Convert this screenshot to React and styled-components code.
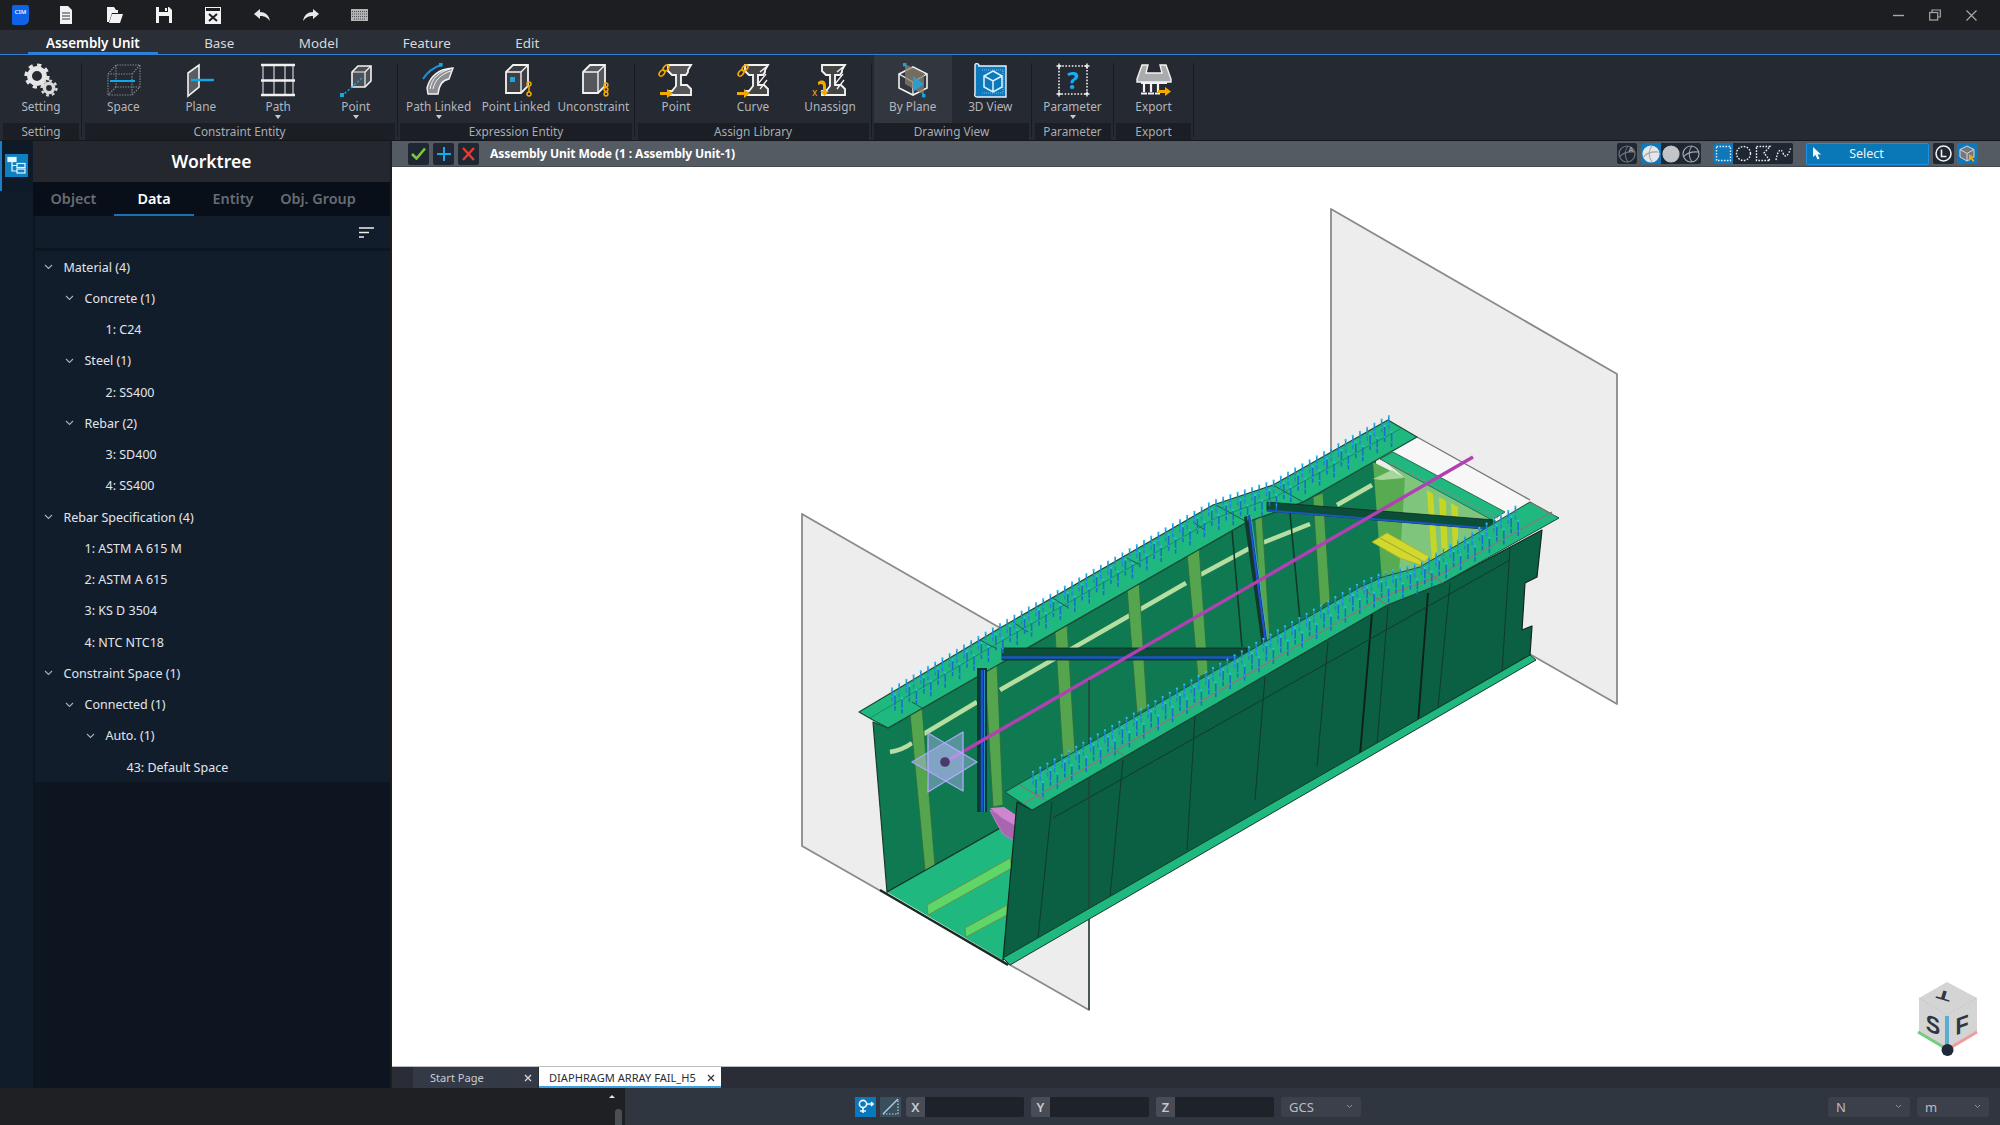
import React from "react";
import styled, { createGlobalStyle } from "styled-components";

const GlobalStyle = createGlobalStyle`
  html, body { margin: 0; padding: 0; background: #1c1e22; }
  body { font-family: "Noto Sans", "Open Sans", sans-serif; }
  * { box-sizing: border-box; }
`;

const Shell = styled.div`
  width: 2000px;
  height: 1125px;
  overflow: hidden;
  display: flex;
  flex-direction: column;
  background: #1c1e22;
`;

/* title bar */
const TitleBar = styled.div`
  height: 30px;
  display: flex;
  align-items: center;
  background: #1c1e22;
  padding-left: 12px;
`;
const QuickIcon = styled.div`
  width: 49px;
  display: flex;
  justify-content: center;
`;
const Logo = styled.div`
  width: 17px;
  height: 20px;
  margin-right: 12px;
  background: #0f62e6;
  border-radius: 2px 2px 5px 2px;
  color: #cfe2ff;
  font-size: 6px;
  font-weight: 700;
  text-align: center;
  line-height: 15px;
`;
const WindowButtons = styled.div`
  margin-left: auto;
  display: flex;
  align-items: center;
  gap: 25px;
  padding-right: 23px;
`;

/* menu tabs */
const MenuBar = styled.div`
  height: 25px;
  display: flex;
  align-items: stretch;
  gap: 28.5px;
  padding-left: 28px;
  background: #2a2e37;
  border-bottom: 1px solid #2f80d8;
`;
const MenuTab = styled.div`
  padding: 1px 18px 0;
  font-size: 13.4px;
  line-height: 24px;
  color: ${(p) => (p.$active ? "#ffffff" : "#d6d9de")};
  font-weight: ${(p) => (p.$active ? 600 : 400)};
  box-shadow: ${(p) => (p.$active ? "inset 0 -2px 0 #2f80d8" : "none")};
`;

/* ribbon */
const Ribbon = styled.div`
  height: 86px;
  display: flex;
  padding-left: 3px;
  background: #252932;
  border-bottom: 1px solid #14171c;
`;
const Group = styled.div`
  width: ${(p) => p.$w}px;
  display: flex;
  flex-direction: column;
`;
const GroupItems = styled.div`
  display: flex;
  height: 68px;
`;
const GroupName = styled.div`
  height: 17px;
  background: #1b1e24;
  color: #a8acb3;
  font-size: 11.8px;
  line-height: 17px;
  text-align: center;
`;
const Separator = styled.div`
  width: 5.5px;
  &::after {
    content: "";
    display: block;
    width: 1px;
    height: 74px;
    margin: 8px 0 0 2px;
    background: #171a1f;
  }
`;
const Tool = styled.div`
  flex: 1;
  display: flex;
  flex-direction: column;
  align-items: center;
  padding-top: 7px;
  background: ${(p) => (p.$hover ? "#32363f" : "transparent")};
`;
const ToolIcon = styled.svg`
  width: 36px;
  height: 36px;
  display: block;
`;
const ToolLabel = styled.div`
  margin-top: 1px;
  height: 14px;
  font-size: 11.8px;
  line-height: 14px;
  color: #b2b6bd;
  white-space: nowrap;
`;
const DropMark = styled.div`
  width: 0;
  height: 0;
  margin-top: 2px;
  border-left: 3px solid transparent;
  border-right: 3px solid transparent;
  border-top: 4px solid #c8ccd2;
`;

/* main */
const Main = styled.div`
  height: 947px;
  display: flex;
`;
const Rail = styled.div`
  width: 33px;
  background: #101c2a;
`;
const RailItem = styled.div`
  height: 50px;
  padding: 13px 0 0 3px;
  border-left: 2px solid #1c7fc8;
  background: #0e1a28;
`;
const RailIcon = styled.div`
  width: 23px;
  height: 23px;
  background: #0f80bf;
  display: flex;
  align-items: center;
  justify-content: center;
`;
const SidePanel = styled.div`
  width: 357px;
  margin-right: 2px;
  display: flex;
  flex-direction: column;
  background: #0c1520;
  border-left: 2px solid #0c1520;
`;
const PanelTitle = styled.div`
  height: 41px;
  margin-left: -2px;
  background: #24272e;
  color: #ffffff;
  font-size: 17.5px;
  font-weight: 600;
  line-height: 41px;
  text-align: center;
`;
const PanelTabs = styled.div`
  height: 34px;
  margin-left: -2px;
  display: grid;
  grid-template-columns: 81px 80px 78px 92px;
  background: #080f18;
`;
const PanelTab = styled.div`
  font-size: 14.4px;
  font-weight: 600;
  line-height: 34px;
  text-align: center;
  color: ${(p) => (p.$active ? "#ffffff" : "#676c72")};
  box-shadow: ${(p) => (p.$active ? "inset 0 -2px 0 #1e6fb0" : "none")};
`;
const SortBar = styled.div`
  height: 32px;
  display: flex;
  align-items: center;
  justify-content: flex-end;
  padding-right: 16px;
  background: #121d2b;
`;
const Tree = styled.div`
  margin-top: 3px;
  background: #121d2b;
`;
const TreeRow = styled.div`
  height: 31.25px;
  display: flex;
  align-items: center;
  padding: 1px 0 0 ${(p) => 7.5 + p.$level * 21}px;
  color: #e1e6ec;
  font-size: 12.5px;
`;
const Caret = styled.div`
  width: 21px;
  flex: none;
  padding-left: 1px;
  display: flex;
  align-items: center;
`;

const WorkArea = styled.div`
  flex: 1;
  display: flex;
  flex-direction: column;
  min-width: 0;
`;
const ViewBar = styled.div`
  height: 26px;
  display: flex;
  align-items: center;
  padding-left: 16px;
  background: #555b63;
  border-bottom: 1px solid #44494f;
`;
const ModeButton = styled.div`
  width: 21px;
  height: 22px;
  margin-right: 4px;
  background: #1f2733;
  border-radius: 2px;
  display: flex;
  align-items: center;
  justify-content: center;
`;
const ModeTitle = styled.div`
  margin-left: 7px;
  color: #ffffff;
  font-size: 12.1px;
  font-weight: 700;
  letter-spacing: -0.1px;
`;
const ViewTools = styled.div`
  margin-left: auto;
  padding-right: 22px;
  display: flex;
  align-items: center;
`;
const IconGroup = styled.div`
  display: flex;
  height: 21px;
  margin-left: ${(p) => p.$gap || 0}px;
  background: #1f2733;
  border-radius: 2px;
  overflow: hidden;
`;
const IconCell = styled.div`
  width: ${(p) => p.$w || 20}px;
  height: 21px;
  display: flex;
  align-items: center;
  justify-content: center;
  background: ${(p) => (p.$on ? "#0f78bb" : "transparent")};
`;
const SelectButton = styled.div`
  width: 123px;
  height: 22px;
  margin-left: 13px;
  display: flex;
  align-items: center;
  padding-left: 5px;
  background: #0a78b6;
  border: 1px solid #1a90e6;
  border-radius: 2px;
  color: #e8f4fb;
  font-size: 12.5px;
`;
const SelectText = styled.span`
  flex: 1;
  text-align: center;
  padding-right: 18px;
`;
const Canvas = styled.div`
  height: 900px;
  background: #ffffff;
  border-bottom: 1px solid #b9bcc0;
`;
const ModelSvg = styled.svg`
  display: block;
  width: 1608px;
  height: 900px;
`;
const DocTabs = styled.div`
  height: 21px;
  display: flex;
  padding-left: 21px;
  background: #2a2d35;
`;
const DocTab = styled.div`
  width: ${(p) => p.$w}px;
  margin-right: 1px;
  display: flex;
  align-items: center;
  justify-content: space-between;
  padding: 0 6px 0 ${(p) => (p.$active ? 10 : 17)}px;
  font-size: 11.1px;
  color: ${(p) => (p.$active ? "#2a2d35" : "#c8ccd2")};
  background: ${(p) => (p.$active ? "#ffffff" : "#333945")};
  box-shadow: ${(p) => (p.$active ? "inset 0 -2px 0 #3aa0e0" : "none")};
`;

/* status bar */
const StatusBar = styled.div`
  height: 37px;
  display: flex;
`;
const StatusLeft = styled.div`
  width: 625px;
  background: #1e2024;
  display: flex;
  flex-direction: column;
  align-items: flex-end;
  padding: 7px 3px 0 0;
`;
const UpMark = styled.div`
  width: 0;
  height: 0;
  margin-right: 7px;
  border-left: 3px solid transparent;
  border-right: 3px solid transparent;
  border-bottom: 3px solid #e6e6e6;
`;
const ScrollThumb = styled.div`
  width: 7px;
  height: 16px;
  margin-top: 11px;
  border-radius: 3px 3px 0 0;
  background: #4a4e55;
`;
const StatusRight = styled.div`
  flex: 1;
  display: flex;
  align-items: center;
  padding: 0 11px 0 230px;
  background: #303640;
`;
const SnapButton = styled.div`
  width: 21px;
  height: 20px;
  margin-right: ${(p) => (p.$on ? 4 : 5)}px;
  display: flex;
  align-items: center;
  justify-content: center;
  background: ${(p) => (p.$on ? "#0a78bc" : "#3c4e5a")};
`;
const Coord = styled.div`
  width: 118px;
  height: 20px;
  margin-right: 7px;
  display: flex;
  border-radius: 2px;
  overflow: hidden;
  background: #1e2229;
`;
const CoordName = styled.div`
  width: 19px;
  background: #474c56;
  color: #c6cad0;
  font-size: 13px;
  font-weight: 600;
  line-height: 20px;
  text-align: center;
`;
const Combo = styled.div`
  width: ${(p) => p.$w}px;
  height: 20px;
  margin-left: ${(p) => p.$gap || 0}px;
  display: flex;
  align-items: center;
  justify-content: space-between;
  padding: 0 8px;
  background: #3c404a;
  border-radius: 3px;
  color: #b8bcc4;
  font-size: 13px;
`;

const w = "#f2f2f2";
const cy = "#12a8e8";
const or = "#f5a800";

const IBeam = ({ hatch }) => (
  <g>
    <path d="M10 3 H33 L30 8 V10 L28 13 H23 V23 H29 L33 27 V33 H10 V29 H14 L18 24 V13 H14 L10 9 Z" fill={hatch ? "#444" : "#565656"} stroke={w} strokeWidth="1.9" />
    {hatch && <path d="M23 22 L31 12 M25 27 L32 18 M25 10 L31 5" stroke={w} strokeWidth="1.3" />}
  </g>
);
const Chain = ({ x, y }) => (
  <g fill="none" stroke={or} strokeWidth="1.6">
    <ellipse cx={x + 5} cy={y + 3} rx="2.2" ry="3.6" transform={`rotate(40 ${x + 5} ${y + 3})`} />
    <ellipse cx={x + 1} cy={y + 8} rx="2.2" ry="3.6" transform={`rotate(40 ${x + 1} ${y + 8})`} />
  </g>
);
const ArrowRight = ({ x, y }) => <path d={`M${x} ${y} h7 v-3 l6 4.5 l-6 4.5 v-3 h-7 Z`} fill={or} />;
const Box3d = ({ fill }) => (
  <g>
    <path d="M8 10 L15 3 H30 V24 L23 31 H8 Z" fill={fill} stroke={w} strokeWidth="1.8" />
    <path d="M8 10 H23 V31 M23 10 L30 3" fill="none" stroke={w} strokeWidth="1.4" />
  </g>
);

const toolIcons = {
  setting: (
    <g>
      <circle cx="14" cy="14" r="7.5" fill="none" stroke="#e6e6e6" strokeWidth="5" />
      <circle cx="14" cy="14" r="11" fill="none" stroke="#e6e6e6" strokeWidth="3.2" strokeDasharray="4.2 4.4" />
      <circle cx="26" cy="26" r="4.6" fill="none" stroke="#d8d8d8" strokeWidth="3.4" />
      <circle cx="26" cy="26" r="7.4" fill="none" stroke="#d8d8d8" strokeWidth="2.4" strokeDasharray="2.8 3" />
    </g>
  ),
  space: (
    <g fill="none" stroke="#8a8d93" strokeWidth="1.1" strokeDasharray="1.4 1.2">
      <path d="M3 12 L11 3 H35 V25 L27 33 H3 Z M3 12 H27 V33 M27 12 L35 3 M11 3 V25 H35 M11 25 L3 33" />
      <path d="M5 19 H30" stroke={cy} strokeWidth="2" strokeDasharray="none" />
    </g>
  ),
  plane: (
    <g>
      <path d="M5 11 L16 3 V25 L5 34 Z" fill="#5a5d62" stroke={w} strokeWidth="1.6" />
      <path d="M8 18 H31" stroke={cy} strokeWidth="2.4" />
    </g>
  ),
  path: (
    <g stroke={w} fill="none">
      <path d="M1 3 H35 M1 18.5 H35 M1 33 H35" strokeWidth="2.6" />
      <path d="M3 3 V33 M14 3 V33 M25 3 V33 M33 3 V33" strokeWidth="1" />
    </g>
  ),
  point: (
    <g>
      <path d="M14 10 L20 4 H33 V19 L27 25 H14 Z" fill="#4c4f55" stroke={w} strokeWidth="1.6" />
      <path d="M14 10 H27 V25 M27 10 L33 4" fill="none" stroke={w} strokeWidth="1.2" />
      <path d="M24 16 L5 33" stroke={cy} strokeWidth="1.4" strokeDasharray="2.4 1.8" />
      <rect x="2" y="31" width="4" height="4" fill={cy} />
    </g>
  ),
  pathLinked: (
    <g>
      <path d="M6 26 C9 14 18 7 32 6 L28 17 C21 18 18 23 17 32 H7 Z" fill="#8d8f93" stroke={w} strokeWidth="1.4" />
      <path d="M12 27 C14 18 20 12 30 9 M9 27 C11 16 18 10 29 7" fill="none" stroke={w} strokeWidth="1" />
      <path d="M2 17 C7 9 14 5 20 3" fill="none" stroke="#1a8fe0" strokeWidth="2" />
      <rect x="18" y="1" width="3.6" height="3.6" fill={cy} />
    </g>
  ),
  pointLinked: (
    <g>
      <Box3d fill="#3d3f44" />
      <rect x="12" y="15" width="5" height="5" fill={cy} />
      <g fill="none" stroke={or} strokeWidth="1.5">
        <circle cx="31" cy="22" r="2" />
        <path d="M31 24 V30" />
        <circle cx="31" cy="32" r="2" />
      </g>
    </g>
  ),
  unconstraint: (
    <g>
      <Box3d fill="#55575c" />
      <g fill="none" stroke={or} strokeWidth="1.5">
        <circle cx="31" cy="23" r="1.9" />
        <circle cx="31" cy="27.5" r="1.9" />
        <circle cx="31" cy="32" r="1.9" />
      </g>
    </g>
  ),
  assignPoint: (
    <g>
      <IBeam />
      <Chain x={3} y={3} />
      <ArrowRight x={2} y={30} />
    </g>
  ),
  assignCurve: (
    <g>
      <IBeam hatch />
      <Chain x={5} y={3} />
      <ArrowRight x={2} y={30} />
    </g>
  ),
  unassign: (
    <g>
      <IBeam hatch />
      <path d="M6 20 C11 17 14 19 14 24 V29 h3 l-4.5 5 l-4.5 -5 h3 V24 C11 22 9 21 6 23 Z" fill={or} />
      <text x="0" y="34" fill={or} fontSize="10" fontFamily="Noto Sans, sans-serif">x</text>
    </g>
  ),
  byPlane: (
    <g>
      <path d="M18 5 L32 12 V26 L18 33 L4 26 V12 Z" fill="none" stroke={w} strokeWidth="1.6" />
      <path d="M4 12 L18 20 L32 12 M18 20 V33" fill="none" stroke={w} strokeWidth="1.4" />
      <path d="M10 2 L29 11 V33 L10 22 Z" fill="#8a7f6e" opacity="0.75" />
      <path d="M18 14 L29 22 L18 30 Z" fill="#2f9bd0" />
      <rect x="8" y="1" width="3.4" height="3.4" fill={cy} />
      <rect x="27" y="32" width="3.4" height="3.4" fill={cy} />
    </g>
  ),
  view3d: (
    <g>
      <path d="M3 3 C3 1 7 1 7 4 H34 V35 H5 C3 35 2 33 3 31 Z" fill="#0d79bd" stroke="#e8f4fb" strokeWidth="1.4" />
      <path d="M10 8 H31 V31 H10" fill="none" stroke="#6dc0ee" strokeDasharray="1 1" />
      <path d="M21 9 L30 14 V25 L21 30 L12 25 V14 Z M12 14 L21 19 L30 14 M21 19 V30" fill="none" stroke="#e2f2fc" strokeWidth="1.5" />
    </g>
  ),
  parameter: (
    <g>
      <rect x="4" y="4" width="28" height="28" fill="none" stroke={w} strokeWidth="1.6" strokeDasharray="1.6 1.6" />
      <path d="M1.5 4 H6.5 M4 1.5 V6.5 M29.5 4 H34.5 M32 1.5 V6.5 M1.5 32 H6.5 M4 29.5 V34.5 M29.5 32 H34.5 M32 29.5 V34.5" stroke={w} strokeWidth="1.4" />
      <text x="18" y="27" textAnchor="middle" fill="#12b0f2" fontSize="24" fontWeight="700" fontFamily="Noto Sans, sans-serif">?</text>
    </g>
  ),
  exportIcon: (
    <g>
      <path d="M1 17 L6 3 H12 L10 11 H26 L24 3 H30 L35 17 V20 H1 Z" fill="#a9abae" stroke={w} strokeWidth="1.4" />
      <path d="M5 21 H31 M8 21 V30 M15 21 V30 M22 21 V30" stroke={w} strokeWidth="2.2" />
      <path d="M5 31.5 H11 M12 31.5 H18 M19 31.5 H24" stroke={w} strokeWidth="1.8" />
      <ArrowRight x={22} y={28} />
    </g>
  ),
};

const groups = [
  { name: "Setting", w: 76, tools: [["Setting", "setting"]] },
  {
    name: "Constraint Entity",
    w: 310,
    tools: [["Space", "space"], ["Plane", "plane"], ["Path", "path", true], ["Point", "point", true]],
  },
  {
    name: "Expression Entity",
    w: 232,
    tools: [["Path Linked", "pathLinked", true], ["Point Linked", "pointLinked"], ["Unconstraint", "unconstraint"]],
  },
  {
    name: "Assign Library",
    w: 231,
    tools: [["Point", "assignPoint"], ["Curve", "assignCurve"], ["Unassign", "unassign"]],
  },
  { name: "Drawing View", w: 155, tools: [["By Plane", "byPlane", false, true], ["3D View", "view3d"]] },
  { name: "Parameter", w: 76, tools: [["Parameter", "parameter", true]] },
  { name: "Export", w: 75, tools: [["Export", "exportIcon"]] },
];

const treeRows = [
  [0, "Material (4)", true],
  [1, "Concrete (1)", true],
  [2, "1: C24"],
  [1, "Steel (1)", true],
  [2, "2: SS400"],
  [1, "Rebar (2)", true],
  [2, "3: SD400"],
  [2, "4: SS400"],
  [0, "Rebar Specification (4)", true],
  [1, "1: ASTM A 615 M"],
  [1, "2: ASTM A 615"],
  [1, "3: KS D 3504"],
  [1, "4: NTC NTC18"],
  [0, "Constraint Space (1)", true],
  [1, "Connected (1)", true],
  [2, "Auto. (1)", true],
  [3, "43: Default Space"],
];

const farEdge = [[859, 712], [1000, 628], [1213, 505], [1273, 485], [1388, 420]];
const nearEdge = [[1005, 792], [1360, 587], [1383, 577], [1420, 567], [1530, 502]];

const edgeY = (pts, x) => {
  for (let i = 0; i < pts.length - 1; i++) {
    const [x0, y0] = pts[i];
    const [x1, y1] = pts[i + 1];
    if (x >= x0 && x <= x1) return y0 + ((x - x0) / (x1 - x0)) * (y1 - y0);
  }
  return pts[pts.length - 1][1];
};

// rebars: a dense row on the flange edge, two longer rows behind it
const pinRows = [
  { dy: -4, step: 7.2, shift: 0, len: 13, color: "#2386d4" },
  { dy: 4, step: 14.4, shift: 3, len: 16, color: "#1a6cc4" },
  { dy: 12, step: 14.4, shift: 10, len: 15, color: "#1a6cc4" },
];

const Pins = ({ edge, from, to }) => {
  const pins = [];
  pinRows.forEach((row) => {
    for (let x = from + row.shift; x < to; x += row.step) {
      pins.push({ x, y: edgeY(edge, x) + row.dy, len: row.len, color: row.color });
    }
  });
  return (
    <g>
      {pins.map((p, i) => (
        <g key={i}>
          <path d={`M${p.x} ${p.y} v${p.len}`} stroke={p.color} strokeWidth="1.5" />
          <circle cx={p.x} cy={p.y} r="1.1" fill="#26c6f2" />
          <circle cx={p.x} cy={p.y + p.len - 5} r="0.8" fill="#26b4ea" />
        </g>
      ))}
    </g>
  );
};

const stiffeners = [
  [[910, 714], [922, 708], [936, 878], [930, 882], [925, 870]],
  [[985, 670], [997, 664], [1003, 805], [993, 807]],
  [[1055, 632], [1067, 625], [1075, 753], [1063, 757]],
  [[1127, 588], [1139, 582], [1147, 708], [1137, 713]],
  [[1187, 553], [1199, 547], [1208, 673], [1198, 677]],
  [[1255, 520], [1262, 516], [1270, 640], [1263, 640]],
  [[1313, 497], [1323, 493], [1330, 600], [1320, 607]],
];

const toPoints = (pts) => pts.map((p) => p.join(",")).join(" ");

const BridgeModel = () => (
  <g strokeLinejoin="round">
    {/* cutting planes */}
    <polygon points="802,514 1089,679 1089,1010 802,846" fill="#ededed" stroke="#8a8a8a" strokeWidth="1.8" />
    <polygon points="1331,209 1617,374 1617,704 1331,540" fill="#ededed" stroke="#8a8a8a" strokeWidth="1.8" />
    <polygon points="1417,437 1530,500 1505,514 1393,452" fill="#f7f7f7" />
    <path d="M1417 437 L1530 500" stroke="#777" strokeWidth="1.4" />

    {/* far web and end plate */}
    <polygon points="873,722 888,728 1247,522 1303,502 1375,460 1385,610 887,892" fill="#0f7a52" stroke="#1c3a2c" strokeWidth="1.2" />
    <polygon points="1385,462 1492,520 1450,572 1420,590 1385,595 1405,478" fill="#80c57c" />
    <polygon points="1373,462 1405,478 1398,590 1383,595" fill="#58ab50" />
    <path d="M1373 479 L1392 470 L1404 478 L1382 480 Z" fill="#a6d69a" />
    <g fill="#c5d626">
      <polygon points="1427,490 1433,494 1438,562 1432,562" />
      <polygon points="1439,497 1446,501 1448,558 1442,560" />
      <polygon points="1451,503 1458,507 1458,548 1453,552" />
    </g>
    <polygon points="1372,542 1387,533 1430,557 1420,565 1400,558" fill="#d2d830" stroke="#aeb41e" strokeWidth="0.8" />
    <path d="M1380 538 L1424 562" stroke="#a8b024" strokeWidth="1.4" />

    {/* pale longitudinal stiffener */}
    <path d="M890 752 C902 750 908 746 912 743 M917 738 L977 702 M1000 690 L1186 583 M1200 575 L1250 548 M1257 545 L1310 524 M1337 505 L1372 485" fill="none" stroke="#b6dea0" strokeWidth="4.5" />
    {stiffeners.map((pts, i) => (
      <polygon key={i} points={toPoints(pts)} fill="#55a54f" stroke="#2f6b3c" strokeWidth="0.8" />
    ))}
    <path d="M1232 530 L1242 647 M1290 513 L1300 620" stroke="#12382a" strokeWidth="1.6" />

    {/* floor */}
    <polygon points="887,892 1020,817 1020,850 1003,960" fill="#1fb87f" />
    <polygon points="927,905 1010,858 1012,868 928,915" fill="#5fd668" stroke="#6c8f50" strokeWidth="1" />
    <polygon points="965,928 1007,905 1007,915 966,937" fill="#5fd668" stroke="#6c8f50" strokeWidth="1" />
    <path d="M880 890 L1008 965" stroke="#182a22" strokeWidth="2.2" />
    <path d="M887 892 L1020 817" stroke="#14352a" strokeWidth="1.2" />

    {/* back flange */}
    <polygon points="1380,459 1393,452 1505,512 1492,520" fill="#1fb87f" stroke="#2e6a52" strokeWidth="1" />
    <path d="M1390 463 L1498 518" stroke="#7a8f85" strokeWidth="1" />

    {/* far flange */}
    <polygon points="859,712 1000,628 1213,505 1273,485 1388,420 1417,437 1303,502 1247,522 888,728 873,720" fill="#1fb87f" stroke="#1a4a38" strokeWidth="1.2" />
    <path d="M870 718 L1000 642 L1216 518 L1275 497 L1402 428" fill="none" stroke="#159064" strokeWidth="1" />
    <path d="M980 640 L997 649 M1013 622 L1028 632 M1053 598 L1067 607 M1127 558 L1140 565 M1193 522 L1205 530 M1216 505 L1247 522 M1273 485 L1303 502 M912 702 L922 708" stroke="#1d5a44" strokeWidth="1" />

    {/* cross beams */}
    <polygon points="1002,648 1247,648 1247,660 1002,660" fill="#0a4e38" stroke="#10281f" strokeWidth="0.8" />
    <path d="M1002 657.5 H1247" stroke="#1a56c4" strokeWidth="2.4" />
    <polygon points="1267,502 1495,520 1495,530 1267,511" fill="#0a4e38" stroke="#10281f" strokeWidth="0.8" />
    <path d="M1267 510.5 L1495 529" stroke="#1a56c4" strokeWidth="1.8" />
    <polygon points="1244,517 1250,515 1268,645 1262,647" fill="#12382a" />
    <path d="M1249 516 L1266 645" stroke="#1e50d8" strokeWidth="2" />
    <path d="M1251 516 L1268 644" stroke="#3db0e0" strokeWidth="0.8" />
    <rect x="977" y="668" width="10" height="144" fill="#0b3a34" />
    <path d="M982 670 V812" stroke="#1a50d8" strokeWidth="2.6" />
    <path d="M984.5 670 V812" stroke="#2fa0d8" strokeWidth="0.8" />

    {/* axis and gizmo */}
    <path d="M945 762 L1473 457" stroke="#b340b3" strokeWidth="3.4" />
    <polygon points="990,810 1016,820 1016,842 1003,834 996,822" fill="#a866b0" stroke="#c77cc7" strokeWidth="1" />
    <polygon points="990,808 1004,807 1016,815 1016,826 1002,818" fill="#cf86cf" />
    <g fill="#bcb8ff" fillOpacity="0.42" stroke="#a8a8f4" strokeWidth="1.4">
      <polygon points="928,733 928,792 977,762" />
      <polygon points="963,732 963,791 912,762" />
    </g>
    <circle cx="945" cy="762" r="4.8" fill="#4a3a6a" />

    {/* near web */}
    <polygon points="1017,802 1032,810 1387,605 1443,583 1542,530 1537,577 1525,583 1522,630 1532,626 1530,655 1003,960" fill="#0b5f42" stroke="#12281f" strokeWidth="1.2" />
    <path d="M1372 613 L1360 755 M1428 593 L1418 723" stroke="#0c1f18" strokeWidth="1.8" />
    <path d="M1388 607 L1377 745 M1450 583 L1438 708 M1328 642 L1317 767 M1265 677 L1255 800 M1195 717 L1187 850 M1123 760 L1110 897 M1052 802 L1038 938 M1510 547 L1502 673 M1053 818 L1510 560" fill="none" stroke="#123a2c" strokeWidth="1" />
    <path d="M1089 680 V1010" stroke="#284038" strokeWidth="1.4" />

    {/* near and bottom flanges */}
    <polygon points="1005,792 1360,587 1383,577 1420,567 1530,502 1559,518 1443,583 1387,605 1032,810" fill="#1fb87f" stroke="#1d4a3a" strokeWidth="1" />
    <path d="M1023 804 L1380 598 L1436 577 L1552 512" fill="none" stroke="#8a7a7a" strokeWidth="1.4" />
    <path d="M1020 785 L1045 800 M1108 746 L1125 756 M1360 587 L1387 605 M1420 567 L1443 583 M1530 502 L1555 516" stroke="#7a7a72" strokeWidth="1.2" />
    <polygon points="1003,958 1530,655 1536,660 1010,965" fill="#1fb87f" stroke="#173a2c" strokeWidth="1" />

    <Pins edge={farEdge} from={892} to={1395} />
    <Pins edge={nearEdge} from={1033} to={1522} />

    {/* orientation cube */}
    <polygon points="1947,982 1977,998 1977,1033 1947,1050 1919,1033 1919,998" fill="#d4d4d4" />
    <path d="M1919 998 L1947 1015 L1977 998" fill="none" stroke="#c4c4c4" strokeDasharray="2 2" />
    <g fill="#2f3642" fontFamily="Liberation Sans, sans-serif" fontWeight="700" textAnchor="middle">
      <text fontSize="24" transform="translate(1945,991) rotate(197) scale(1,0.55)">T</text>
      <text fontSize="24" transform="translate(1933,1033) skewY(20) scale(0.9,1)">S</text>
      <text fontSize="24" transform="translate(1962,1033) skewY(-20) scale(0.9,1)">F</text>
    </g>
    <path d="M1947 1016 V1048" stroke="#5cabd0" strokeWidth="4" />
    <path d="M1918 1032 L1945 1048" stroke="#74cc80" strokeWidth="3" />
    <path d="M1977 1032 L1950 1048" stroke="#ee9c9c" strokeWidth="3" />
    <circle cx="1947.5" cy="1050" r="6" fill="#1e2a3a" />
  </g>
);

const Globe = ({ color = "#d8dade", fill = "none", lines = true, badge }) => (
  <svg width="18" height="18" viewBox="0 0 18 18">
    <circle cx="9" cy="9" r="8" fill={fill} stroke={fill === "none" ? color : fill} strokeWidth="1.2" />
    {lines && <path d="M1.5 12 C5 7.5 11 6.5 16.5 7 M10 1 C6.5 5 6 12 10 17" fill="none" stroke={color} strokeWidth="1.1" />}
    {badge && (
      <text x="13" y="7" textAnchor="middle" fontSize="7" fontWeight="700" fill="#9a9da3" fontFamily="Noto Sans, sans-serif">
        {badge}
      </text>
    )}
  </svg>
);

const Marquee = ({ children }) => (
  <svg width="17" height="17" viewBox="0 0 17 17" fill="none" stroke="#e8eef4" strokeWidth="1.4" strokeDasharray="1.6 1.4">
    {children}
  </svg>
);

const Close = ({ color }) => (
  <svg width="8" height="8" viewBox="0 0 8 8">
    <path d="M1 1 L7 7 M7 1 L1 7" stroke={color} strokeWidth="1.3" />
  </svg>
);

const ComboArrow = () => (
  <svg width="7" height="5" viewBox="0 0 7 5">
    <path d="M1 1 L3.5 3.5 L6 1" fill="none" stroke="#8e929a" strokeWidth="1" />
  </svg>
);

export default function App() {
  return (
    <Shell>
      <GlobalStyle />
      <TitleBar>
        <Logo>CIM</Logo>
        <QuickIcon>
          <svg width="16" height="18" viewBox="0 0 16 18">
            <path d="M2 0 H10 L14 4 V18 H2 Z" fill="#f2f2f2" />
            <path d="M4 7 H12 M4 10 H12 M4 13 H12" stroke="#33363c" strokeWidth="1" />
          </svg>
        </QuickIcon>
        <QuickIcon>
          <svg width="18" height="18" viewBox="0 0 18 18">
            <path d="M1 1 H8 L10 4 H12 V7 H6 L3 16 H1 Z" fill="#f2f2f2" />
            <path d="M6 8 H17 L14 17 H3 Z" fill="#f2f2f2" />
          </svg>
        </QuickIcon>
        <QuickIcon>
          <svg width="18" height="18" viewBox="0 0 18 18">
            <path d="M1 1 H14 L17 4 V17 H1 Z" fill="#f2f2f2" />
            <rect x="4" y="1" width="9" height="5" fill="#1c1e22" />
            <rect x="10" y="2" width="2" height="3" fill="#f2f2f2" />
            <rect x="4" y="10" width="10" height="7" fill="#1c1e22" />
          </svg>
        </QuickIcon>
        <QuickIcon>
          <svg width="18" height="18" viewBox="0 0 18 18">
            <rect x="1" y="1" width="16" height="17" fill="#f2f2f2" />
            <rect x="2" y="2" width="14" height="3" fill="#1c1e22" />
            <path d="M5 8 L13 15 M13 8 L5 15" stroke="#1c1e22" strokeWidth="2" />
          </svg>
        </QuickIcon>
        <QuickIcon>
          <svg width="18" height="14" viewBox="0 0 18 14">
            <path d="M1 6 L7 1 V4 C12 4 16 7 17 13 C14 9 11 8 7 8 V11 Z" fill="#e8e8e8" />
          </svg>
        </QuickIcon>
        <QuickIcon>
          <svg width="18" height="14" viewBox="0 0 18 14">
            <path d="M17 6 L11 1 V4 C6 4 2 7 1 13 C4 9 7 8 11 8 V11 Z" fill="#e8e8e8" />
          </svg>
        </QuickIcon>
        <QuickIcon>
          <svg width="17" height="12" viewBox="0 0 17 12">
            <rect width="17" height="12" fill="#b4b4b4" />
            <path d="M1 2.5 H16 M1 5 H16 M1 7.5 H16 M3 10 H14" stroke="#4a4d52" strokeWidth="1.2" strokeDasharray="1 1" />
          </svg>
        </QuickIcon>
        <WindowButtons>
          <svg width="11" height="3" viewBox="0 0 11 3">
            <path d="M0 1.5 H11" stroke="#a8a8a8" strokeWidth="1.4" />
          </svg>
          <svg width="12" height="12" viewBox="0 0 12 12" fill="none" stroke="#a8a8a8" strokeWidth="1.2">
            <rect x="0.7" y="3.5" width="8" height="7.5" />
            <path d="M3 3.5 V1 H11.3 V8 H8.7" />
          </svg>
          <svg width="11" height="11" viewBox="0 0 11 11">
            <path d="M0.5 0.5 L10.5 10.5 M10.5 0.5 L0.5 10.5" stroke="#a8a8a8" strokeWidth="1.2" />
          </svg>
        </WindowButtons>
      </TitleBar>

      <MenuBar>
        <MenuTab $active>Assembly Unit</MenuTab>
        <MenuTab>Base</MenuTab>
        <MenuTab>Model</MenuTab>
        <MenuTab>Feature</MenuTab>
        <MenuTab>Edit</MenuTab>
      </MenuBar>

      <Ribbon>
        {groups.map((g) => (
          <React.Fragment key={g.name}>
            <Group $w={g.w}>
              <GroupItems>
                {g.tools.map(([label, icon, drop, hover]) => (
                  <Tool key={icon} $hover={hover}>
                    <ToolIcon viewBox="0 0 36 36">{toolIcons[icon]}</ToolIcon>
                    <ToolLabel>{label}</ToolLabel>
                    {drop && <DropMark />}
                  </Tool>
                ))}
              </GroupItems>
              <GroupName>{g.name}</GroupName>
            </Group>
            <Separator />
          </React.Fragment>
        ))}
      </Ribbon>

      <Main>
        <Rail>
          <RailItem>
            <RailIcon>
              <svg width="19" height="19" viewBox="0 0 19 19" fill="none" stroke="#eaf6fd" strokeWidth="1.2">
                <rect x="1" y="1.5" width="8" height="4" fill="#eaf6fd" />
                <path d="M5 5.5 V15 H10 M5 9.5 H10" />
                <rect x="10" y="7.5" width="8" height="4" />
                <rect x="10" y="13" width="8" height="4" />
              </svg>
            </RailIcon>
          </RailItem>
        </Rail>
        <SidePanel>
          <PanelTitle>Worktree</PanelTitle>
          <PanelTabs>
            <PanelTab>Object</PanelTab>
            <PanelTab $active>Data</PanelTab>
            <PanelTab>Entity</PanelTab>
            <PanelTab>Obj. Group</PanelTab>
          </PanelTabs>
          <SortBar>
            <svg width="15" height="11" viewBox="0 0 15 11">
              <path d="M0 1 H15 M0 5.5 H10 M0 10 H5" stroke="#f0f0f0" strokeWidth="1.7" />
            </svg>
          </SortBar>
          <Tree>
            {treeRows.map(([level, text, open], i) => (
              <TreeRow key={i} $level={level}>
                <Caret>
                  {open && (
                    <svg width="9" height="6" viewBox="0 0 9 6">
                      <path d="M1 1 L4.5 4.5 L8 1" fill="none" stroke="#a9b0b8" strokeWidth="1.1" />
                    </svg>
                  )}
                </Caret>
                {text}
              </TreeRow>
            ))}
          </Tree>
        </SidePanel>

        <WorkArea>
          <ViewBar>
            <ModeButton>
              <svg width="15" height="13" viewBox="0 0 15 13">
                <path d="M1 7 L5.5 11.5 L14 1.5" fill="none" stroke="#7ec63a" strokeWidth="2.6" />
              </svg>
            </ModeButton>
            <ModeButton>
              <svg width="14" height="14" viewBox="0 0 14 14">
                <path d="M7 0 V14 M0 7 H14" stroke="#18a8f0" strokeWidth="2" />
              </svg>
            </ModeButton>
            <ModeButton>
              <svg width="13" height="14" viewBox="0 0 13 14">
                <path d="M1 1 L12 13 M12 1 L1 13" stroke="#e83a2e" strokeWidth="2.4" />
              </svg>
            </ModeButton>
            <ModeTitle>Assembly Unit Mode (1 : Assembly Unit-1)</ModeTitle>
            <ViewTools>
              <IconGroup>
                <IconCell>
                  <Globe color="#70757c" badge="A" />
                </IconCell>
              </IconGroup>
              <IconGroup $gap={4}>
                <IconCell $on>
                  <Globe color="#9fa6ad" fill="#e4e6e8" />
                </IconCell>
                <IconCell>
                  <Globe fill="#c2c4c8" lines={false} />
                </IconCell>
                <IconCell>
                  <Globe color="#a6a9ae" />
                </IconCell>
              </IconGroup>
              <IconGroup $gap={12}>
                <IconCell $on>
                  <Marquee>
                    <rect x="1.5" y="1.5" width="14" height="14" />
                  </Marquee>
                </IconCell>
                <IconCell>
                  <Marquee>
                    <circle cx="8.5" cy="8.5" r="7" />
                  </Marquee>
                </IconCell>
                <IconCell>
                  <Marquee>
                    <path d="M1.5 1.5 H15 L9 8 L15 15.5 H1.5 Z" />
                  </Marquee>
                </IconCell>
                <IconCell>
                  <Marquee>
                    <path d="M1 15 C3 4 6 3 8 8 C10 13 13 12 16 2" />
                  </Marquee>
                </IconCell>
              </IconGroup>
              <SelectButton>
                <svg width="11" height="13" viewBox="0 0 11 13">
                  <path d="M1 0 V10 L3.5 8 L5.5 12.5 L7.5 11.5 L5.5 7.5 H9 Z" fill="#f4f8fb" />
                </svg>
                <SelectText>Select</SelectText>
              </SelectButton>
              <IconGroup $gap={4}>
                <IconCell $w={21}>
                  <svg width="17" height="17" viewBox="0 0 17 17" fill="none" stroke="#f0f0f0">
                    <circle cx="8.5" cy="8.5" r="7.5" strokeWidth="1.6" />
                    <path d="M6.5 4.5 V11.5 H11.5" strokeWidth="1.6" />
                  </svg>
                </IconCell>
              </IconGroup>
              <IconGroup $gap={3}>
                <IconCell $on $w={21}>
                  <svg width="17" height="17" viewBox="0 0 17 17">
                    <path d="M8 1 L15 4.5 V12 L8 16 L1 12 V4.5 Z" fill="#74787e" stroke="#d6d8da" />
                    <path d="M1 4.5 L8 8.5 L15 4.5 M8 8.5 V16" fill="none" stroke="#d6d8da" />
                    <path d="M10 9 V16 L12 14 L14 17 L15.5 16 L13.5 13 H16 Z" fill="#f5a800" />
                  </svg>
                </IconCell>
              </IconGroup>
            </ViewTools>
          </ViewBar>
          <Canvas>
            <ModelSvg viewBox="392 167 1608 900">
              <BridgeModel />
            </ModelSvg>
          </Canvas>
          <DocTabs>
            <DocTab $w={125}>
              Start Page
              <Close color="#d8dade" />
            </DocTab>
            <DocTab $w={182} $active>
              DIAPHRAGM ARRAY FAIL_H5
              <Close color="#33363c" />
            </DocTab>
          </DocTabs>
        </WorkArea>
      </Main>

      <StatusBar>
        <StatusLeft>
          <UpMark />
          <ScrollThumb />
        </StatusLeft>
        <StatusRight>
          <SnapButton $on>
            <svg width="17" height="17" viewBox="0 0 17 17" fill="none" stroke="#f4f8fb" strokeWidth="1.6">
              <circle cx="6" cy="6" r="3.6" />
              <path d="M6 10 V15 M3 13 H9 M10 6 H16 M14 4 L16 6 L14 8" />
            </svg>
          </SnapButton>
          <SnapButton>
            <svg width="17" height="17" viewBox="0 0 17 17" fill="none" stroke="#a8d8f4" strokeWidth="1.2">
              <path d="M1 16 L16 1" />
              <path d="M1 16 H16 V1" strokeDasharray="1.5 1.5" />
            </svg>
          </SnapButton>
          <Coord>
            <CoordName>X</CoordName>
          </Coord>
          <Coord>
            <CoordName>Y</CoordName>
          </Coord>
          <Coord>
            <CoordName>Z</CoordName>
          </Coord>
          <Combo $w={80}>
            GCS
            <ComboArrow />
          </Combo>
          <Combo $w={82} $gap={467}>
            N
            <ComboArrow />
          </Combo>
          <Combo $w={72} $gap={7}>
            m
            <ComboArrow />
          </Combo>
        </StatusRight>
      </StatusBar>
    </Shell>
  );
}
